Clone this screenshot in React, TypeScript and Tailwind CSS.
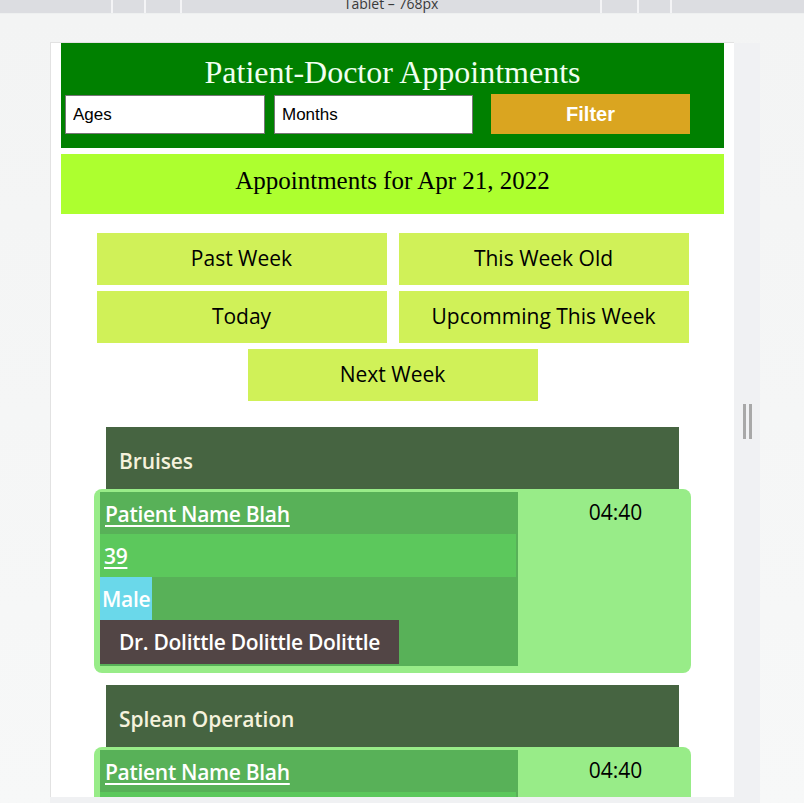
import React from 'react'

type Appt = {
  title: string
  patient: string
  age: string
  gender: string
  doctor: string
  time: string
}

const appointments: Appt[] = [
  { title: 'Bruises', patient: 'Patient Name Blah', age: '39', gender: 'Male', doctor: 'Dr. Dolittle Dolittle Dolittle', time: '04:40' },
  { title: 'Splean Operation', patient: 'Patient Name Blah', age: '39', gender: 'Male', doctor: 'Dr. Dolittle Dolittle Dolittle', time: '04:40' },
]

const ranges = ['Past Week', 'This Week Old', 'Today', 'Upcomming This Week', 'Next Week']

function DeviceBar() {
  return (
    <div className="flex shrink-0 h-[13px] bg-[#dcdde1] overflow-hidden text-[#3a3a3a] font-['Open_Sans',sans-serif]">
      <div className="w-[113px] border-r-2 border-[#f4f4f6]" />
      <div className="w-[33px] border-r-2 border-[#f4f4f6]" />
      <div className="w-[36px] border-r-2 border-[#f4f4f6]" />
      <div className="w-[420px] border-r-2 border-[#f4f4f6] text-center">
        <div className="mt-[-3px] text-[14px] leading-[14px]">Tablet – 768px</div>
      </div>
      <div className="w-[37px] border-r-2 border-[#f4f4f6]" />
      <div className="w-[33px] border-r-2 border-[#f4f4f6]" />
      <div className="flex-1" />
    </div>
  )
}

function AppointmentCard({ appt }: { appt: Appt }) {
  return (
    <div className="flex flex-col items-center mt-[12px] first:mt-[26px]">
      <div className="w-[573px] h-[62px] bg-[#466441] pl-[13px] pt-[6px] text-[#f5f2dc] font-semibold text-[21px] leading-[56px] tracking-[-0.1px]">
        {appt.title}
      </div>
      <div className="w-[597px] flex bg-[#98ec88] rounded-[8px] pl-[6px] pt-[3px] pb-[7px]">
        <div className="w-[418px] pb-[2px] bg-[#58b158] flex flex-col items-start text-white font-semibold text-[21px] tracking-[-0.3px]">
          <div className="h-[42px] leading-[42px] pl-[5px] pt-[1px]">
            <a href="#" className="underline underline-offset-[3px] decoration-2">{appt.patient}</a>
          </div>
          <div className="w-[416px] h-[43px] leading-[43px] pl-[4px] pt-[1px] bg-[#5cc85c]">
            <a href="#" className="underline underline-offset-[3px] decoration-2">{appt.age}</a>
          </div>
          <div className="h-[43px] leading-[43px] px-[2px] pt-[1px] bg-[#6ad8ea]">{appt.gender}</div>
          <div className="h-[44px] leading-[44px] px-[19px] bg-[#524545]">{appt.doctor}</div>
        </div>
        <div className="flex-1 pl-[22px] text-center text-black text-[21px] leading-[40px]">{appt.time}</div>
      </div>
    </div>
  )
}

function Page() {
  return (
    <div className="h-full px-[10px] font-['Open_Sans',sans-serif]">
      <header className="bg-[#008000] pt-[7px] pb-[14px]">
        <h1 className="text-center text-[32px] leading-[44px] text-[#f0fff0] font-['Liberation_Serif',serif]">
          Patient-Doctor Appointments
        </h1>
        <div className="flex items-center pl-[4px] font-['Liberation_Sans',Arial,sans-serif]">
          <input
            placeholder="Ages"
            className="w-[200px] h-[39px] bg-white border border-[#767676] px-[7px] pt-[1px] text-[17px] text-black placeholder:text-black outline-none"
          />
          <input
            placeholder="Months"
            className="ml-[9px] w-[199px] h-[39px] bg-white border border-[#767676] px-[7px] pt-[1px] text-[17px] text-black placeholder:text-black outline-none"
          />
          <button className="ml-[18px] w-[199px] h-[40px] bg-[#daa520] text-white font-bold text-[20px]">Filter</button>
        </div>
      </header>

      <div className="mt-[6px] h-[60px] bg-[#adff2f] flex items-center justify-center pb-[7px] text-[25px] text-black font-['Liberation_Serif',serif]">
        Appointments for Apr 21, 2022
      </div>

      <div className="mt-[19px] flex flex-wrap justify-center gap-x-[12px] gap-y-[6px]">
        {ranges.map(r => (
          <button key={r} className="w-[290px] h-[52px] bg-[#d0f158] text-black text-[21px]">
            {r}
          </button>
        ))}
      </div>

      <div>
        {appointments.map((a, i) => (
          <AppointmentCard key={i} appt={a} />
        ))}
      </div>
    </div>
  )
}

export default function App() {
  return (
    <div className="w-[804px] h-[803px] flex flex-col bg-[#f6f7f7] overflow-hidden">
      <DeviceBar />
      <div className="shrink-0 h-[1px] bg-[#eef0f0]" />
      <div className="flex-1 flex flex-col pt-[28px] pl-[50px] bg-gradient-to-b from-[#f3f4f4] to-[#f7f8f8]">
        <div className="flex shrink-0">
          <div className="w-[684px] h-[755px] bg-white border-l border-t border-[#e2e2e2] overflow-hidden">
            <Page />
          </div>
          <div className="w-[26px] mt-[1px] bg-[#f0f1f3] flex justify-center pt-[361px] gap-[3px]">
            <div className="w-[3px] h-[35px] bg-[#a8a8a8]" />
            <div className="w-[3px] h-[35px] bg-[#a8a8a8]" />
          </div>
        </div>
        <div className="shrink-0 w-[710px] h-[6px] bg-[#f0f1f3]" />
      </div>
    </div>
  )
}
